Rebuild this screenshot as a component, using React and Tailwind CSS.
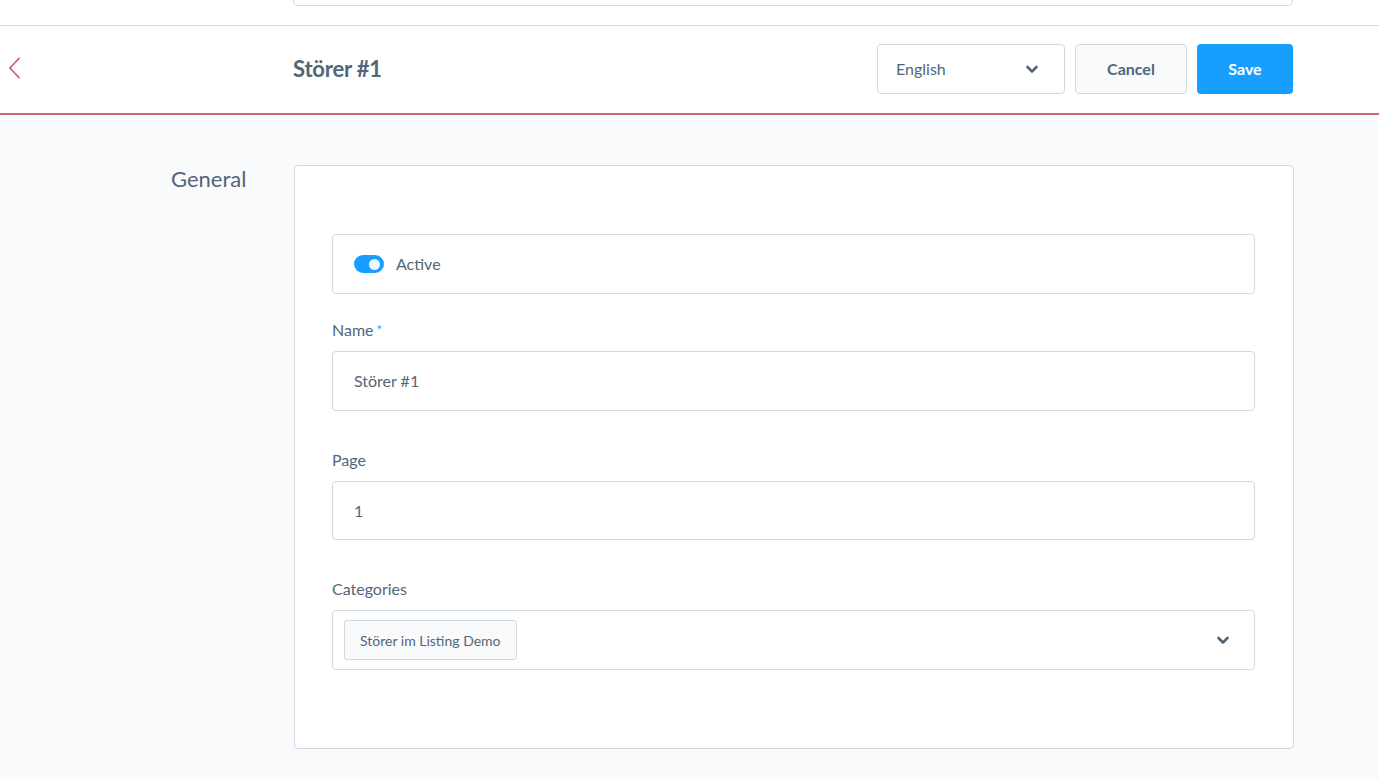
const font = { fontFamily: 'Lato, "Noto Sans", sans-serif' };

function Chevron({ className = '' }) {
  return (
    <svg viewBox="0 0 16 16" className={className} fill="none" stroke="currentColor" strokeWidth="2.6" strokeLinecap="round" strokeLinejoin="round">
      <path d="M3.5 6 8 10.5 12.5 6" />
    </svg>
  );
}

function BackArrow({ className = '' }) {
  return (
    <svg viewBox="0 0 14 24" className={className} fill="none" stroke="currentColor" strokeWidth="1.7" strokeLinecap="round" strokeLinejoin="round">
      <path d="M12 1.5 2 12l10 10.5" />
    </svg>
  );
}

function Field({ label, required, children, className = '' }) {
  return (
    <div className={className}>
      <label className="block h-[22px] leading-[22px] text-[16px] text-[#52667a] mb-[10px]">
        {label}
        {required && <span className="text-[#189eff] text-[13px] align-top ml-[3px]">*</span>}
      </label>
      {children}
    </div>
  );
}

export default function App() {
  return (
    <div className="min-h-screen bg-[#f9fafb] text-[#52667a]" style={font}>
      {/* top search bar remnant */}
      <div className="h-[26px] bg-white border-b border-[#d1d9e0]">
        <div className="ml-[293px] w-[1000px] h-[6px] border-x border-b border-[#d1d9e0] rounded-b-[5px]" />
      </div>

      {/* smart bar */}
      <div className="h-[89px] bg-white border-b-2 border-[#c26b78] flex items-center">
        <div className="w-[293px] pl-[8px] flex items-center -mt-[3px]">
          <BackArrow className="w-[13px] h-[24px] text-[#cf5566]" />
        </div>
        <h1 className="flex-1 text-[22px] font-bold text-[#52667a] tracking-[-0.2px] -mt-[2px]">Störer #1</h1>
        <div className="flex items-center gap-[10px] mr-[86px] -mt-[2px]">
          <div className="w-[188px] h-[50px] border border-[#d1d9e0] rounded-[4px] bg-white flex items-center justify-between pl-[18px] pr-[24px]">
            <span className="text-[16px] text-[#52667a]">English</span>
            <Chevron className="w-[16px] h-[16px] text-[#52667a]" />
          </div>
          <button className="w-[112px] h-[50px] border border-[#d1d9e0] rounded-[4px] bg-[#f9fafb] text-[16px] font-bold text-[#52667a]">
            Cancel
          </button>
          <button className="w-[96px] h-[50px] rounded-[4px] bg-[#189eff] text-[16px] font-bold text-white">
            Save
          </button>
        </div>
      </div>

      {/* content */}
      <div className="flex pt-[50px] pb-[30px]">
        <div className="w-[294px] pl-[171px]">
          <h2 className="text-[22px] leading-[28px] text-[#52667a]">General</h2>
        </div>
        <div className="w-[1000px] bg-white border border-[#d1d9e0] rounded-[4px] pl-[37px] pr-[38px] pt-[68px] pb-[78px]">
          <div className="h-[60px] border border-[#d1d9e0] rounded-[4px] flex items-center pl-[21px] gap-[12px]">
            <div className="w-[30px] h-[18px] rounded-full bg-[#189eff] flex items-center justify-end pr-[4px]">
              <div className="w-[11px] h-[11px] rounded-full bg-[#eef7ff]" />
            </div>
            <span className="text-[16px] text-[#52667a]">Active</span>
          </div>

          <Field label="Name" required className="mt-[25px]">
            <div className="h-[60px] border border-[#d1d9e0] rounded-[4px] flex items-center pl-[21px] text-[16px] text-[#52667a]">
              Störer #1
            </div>
          </Field>

          <Field label="Page" className="mt-[38px]">
            <div className="h-[59px] border border-[#d1d9e0] rounded-[4px] flex items-center pl-[21px] text-[16px] text-[#52667a]">
              1
            </div>
          </Field>

          <Field label="Categories" className="mt-[38px]">
            <div className="h-[60px] border border-[#d1d9e0] rounded-[4px] flex items-center justify-between pl-[11px] pr-[23px]">
              <span className="h-[40px] px-[15px] flex items-center border border-[#d1d9e0] rounded-[3px] bg-[#f9fafb] text-[14px] text-[#52667a]">
                Störer im Listing Demo
              </span>
              <Chevron className="w-[16px] h-[16px] text-[#52667a]" />
            </div>
          </Field>
        </div>
      </div>
    </div>
  );
}
